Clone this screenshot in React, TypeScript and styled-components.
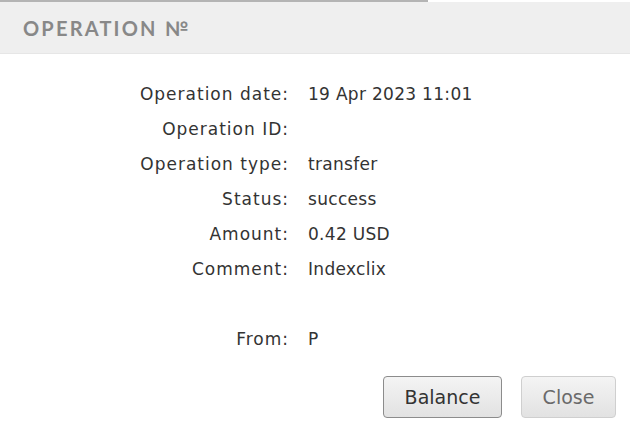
import { createGlobalStyle } from 'styled-components'
import styled from 'styled-components'

const GlobalStyle = createGlobalStyle`
  html, body {
    margin: 0;
    padding: 0;
    background: #ffffff;
  }
  body {
    width: 630px;
    height: 437px;
    overflow: hidden;
  }
`

const rows: Array<[string, string]> = [
  ['Operation date:', '19 Apr 2023 11:01'],
  ['Operation ID:', ''],
  ['Operation type:', 'transfer'],
  ['Status:', 'success'],
  ['Amount:', '0.42 USD'],
  ['Comment:', 'Indexclix'],
  ['', ''],
  ['From:', 'P']
]

export default function App () {
  return (
    <>
      <GlobalStyle />
      <Dialog>
        <TopEdge />
        <Header>
          <Title>OPERATION №</Title>
        </Header>
        <Details>
          {rows.map(([label, value], i) => (
            <Row key={i}>
              <Label>{label}</Label>
              <Value>{value}</Value>
            </Row>
          ))}
        </Details>
        <Footer>
          <Button primary>Balance</Button>
          <Button>Close</Button>
        </Footer>
      </Dialog>
    </>
  )
}

const Dialog = styled.div`
  width: 630px;
  height: 437px;
  display: flex;
  flex-direction: column;
  background: #fff;
`

const TopEdge = styled.div`
  width: 428px;
  height: 2px;
  background: #b4b4b4;
`

const Header = styled.div`
  height: 51px;
  display: flex;
  align-items: center;
  padding-left: 23px;
  background: #efefef;
  border-bottom: 1px solid #e6e6e6;
`

const Title = styled.h1`
  margin: 0;
  font-family: 'Lato', 'Liberation Sans', sans-serif;
  font-size: 20px;
  font-weight: 700;
  letter-spacing: 2.2px;
  color: #888;
`

const Details = styled.div`
  display: flex;
  flex-direction: column;
  padding-top: 22px;
`

const Row = styled.div`
  display: grid;
  grid-template-columns: 288px 1fr;
  column-gap: 20px;
  height: 35px;
  align-items: center;
  font-family: 'DejaVu Sans', 'Liberation Sans', sans-serif;
  font-size: 17px;
  color: #333;
`

const Label = styled.span`
  text-align: right;
  letter-spacing: 1px;
  margin-right: -1px;
`

const Value = styled.span`
  text-align: left;
  letter-spacing: 0.3px;
`

const Footer = styled.div`
  display: flex;
  justify-content: flex-end;
  gap: 19px;
  padding: 20px 14px 0 0;
`

const Button = styled.button<{ primary?: boolean }>`
  height: 42px;
  padding: 0 20px;
  min-width: ${p => (p.primary ? '119px' : '95px')};
  border-radius: 4px;
  border: 1px solid ${p => (p.primary ? '#8c8c8c' : '#cfcfcf')};
  background: linear-gradient(#f4f4f4, #e2e2e2);
  font-family: 'DejaVu Sans', Verdana, sans-serif;
  font-size: 19px;
  color: ${p => (p.primary ? '#333' : '#6a6a6a')};
  cursor: pointer;
`
